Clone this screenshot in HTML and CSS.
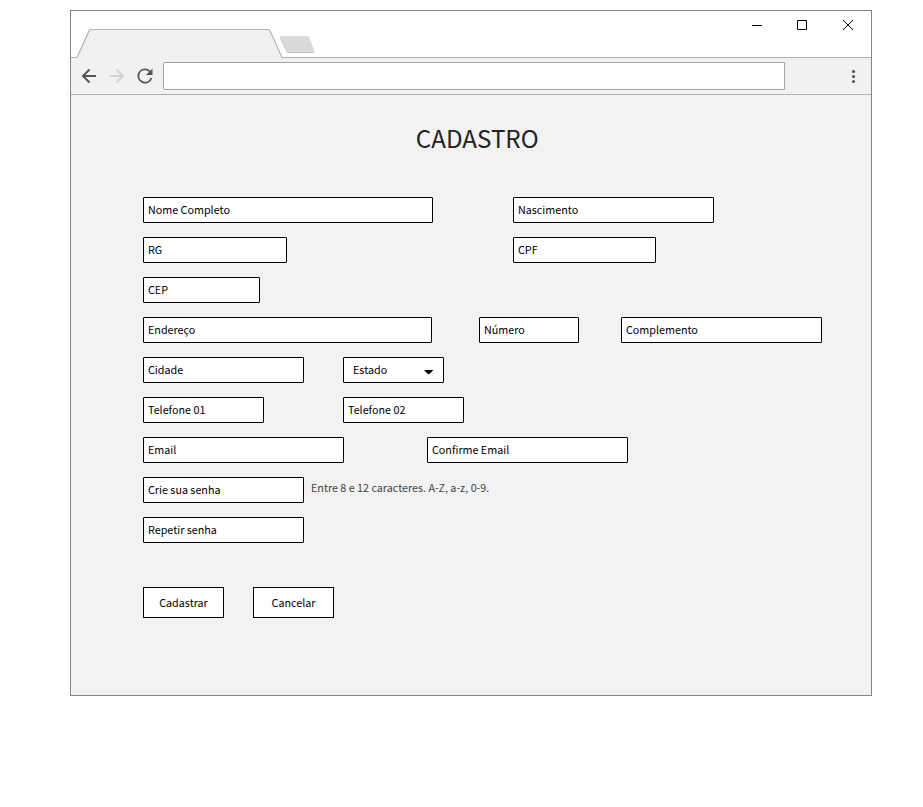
FILE: index.html
```html
<!DOCTYPE html>
<html lang="pt-BR">
<head>
<meta charset="utf-8">
<title>Cadastro</title>
<link rel="stylesheet" href="styles.css">
</head>
<body>
<div class="window">
  <svg class="titlebar" width="800" height="47" viewBox="0 0 800 47">
    <path d="M0 46.5H5.7L6.5 45.5L18.2 19.5Q18.7 18.5 19.5 18.5H197.5Q198.4 18.5 198.9 19.5L210.5 45.5L211.5 46.5H800V48H0Z" fill="#f1f1f1"/>
    <path d="M0 46.5H5.7L6.5 45.5L18.2 19.5Q18.7 18.5 19.5 18.5H197.5Q198.4 18.5 198.9 19.5L210.5 45.5L211.5 46.5H800" fill="none" stroke="#b2b2b2" stroke-width="1.2"/>
    <path d="M210 26H236Q237.500 26 238 27L243.300 40.500Q243.500 42 242 42H217.500Q216 42 215.300 40.500L209 27.500Q208.600 26 210 26Z" fill="#c4c4c4"/>
    <path d="M210 25H236Q237.500 25 238 26L243.300 39.500Q243.500 41 242 41H217.500Q216 41 215.300 39.500L209 26.500Q208.600 25 210 25Z" fill="#dadada"/>
    <path d="M681 14.500H691M726.500 9.500H735.500V18.500H726.500Z" fill="none" stroke="#000"/>
    <path d="M772 9L782 19M782 9L772 19" stroke="#000"/>
  </svg>
  <div class="toolbar">
    <svg class="nav" width="92" height="36" viewBox="0 0 92 36">
      <path d="M25 18H12.500M18.500 11.500L12 18L18.500 24.500" fill="none" stroke="#555" stroke-width="2"/>
      <path d="M39 18H51.500M45.500 11.500L52 18L45.500 24.500" fill="none" stroke="#d2d2d2" stroke-width="2"/>
      <path transform="translate(62.680 6.680) scale(.943)" d="M17.650 6.350A7.960 7.960 0 0 0 12 4a8 8 0 1 0 7.730 10h-2.080A6 6 0 1 1 12 6c1.660 0 3.140.69 4.220 1.780L13 11h7V4z" fill="#555"/>
    </svg>
    <div class="address"></div>
    <svg class="menu" width="5" height="16" viewBox="0 0 5 16">
      <g fill="#555"><circle cx="2.500" cy="3.500" r="1.600"/><circle cx="2.500" cy="8.500" r="1.600"/><circle cx="2.500" cy="13.500" r="1.600"/></g>
    </svg>
  </div>
  <main class="page">
    <h1 class="title">CADASTRO</h1>
    <form class="form">
      <div class="row gap-80"><div class="field w-290">Nome Completo</div><div class="field w-201">Nascimento</div></div>
      <div class="row gap-226"><div class="field w-144">RG</div><div class="field w-143">CPF</div></div>
      <div class="row"><div class="field w-117">CEP</div></div>
      <div class="row gap-47"><div class="field w-289">Endereço</div><div class="field w-100">Número</div><div class="field w-201 complement">Complemento</div></div>
      <div class="row gap-39"><div class="field w-161">Cidade</div><div class="field select">Estado<svg width="10" height="6" viewBox="0 0 10 6"><path d="M0 0H9.400L5.700 3.700Q4.700 4.500 3.700 3.700Z"/></svg></div></div>
      <div class="row gap-79"><div class="field w-121">Telefone 01</div><div class="field w-121">Telefone 02</div></div>
      <div class="row gap-83"><div class="field w-201">Email</div><div class="field w-201">Confirme Email</div></div>
      <div class="row gap-7"><div class="field w-161">Crie sua senha</div><span class="hint">Entre 8 e 12 caracteres. A-Z, a-z, 0-9.</span></div>
      <div class="row"><div class="field w-161">Repetir senha</div></div>
      <div class="actions"><button class="button" type="button">Cadastrar</button><button class="button" type="button">Cancelar</button></div>
    </form>
  </main>
</div>
</body>
</html>
```

FILE: styles.css
```css
* { box-sizing: border-box; }
body {
  margin: 0;
  background: #fff;
  font-family: "Noto Sans CJK JP", sans-serif;
  font-size: 10.75px;
  color: #000;
}
.window {
  width: 802px;
  height: 686px;
  margin: 10px 0 0 70px;
  border: 1px solid #858585;
  background: #f2f2f2;
}
.titlebar { display: block; background: #fff; }
.toolbar {
  display: flex;
  align-items: center;
  height: 37px;
  border-bottom: 1px solid #b2b2b2;
  background: #f1f1f1;
}
.address {
  width: 622px;
  height: 28px;
  border: 1px solid #a3a3a3;
  border-radius: 2px 0 0 2px;
  background: #fff;
}
.menu { margin-left: 66px; }
.title {
  margin: 0;
  padding: 23px 0 0 12.5px;
  height: 102px;
  font-size: 24.18px;
  font-weight: 400;
  line-height: 40px;
  text-align: center;
  color: #222;
}
.form {
  display: flex;
  flex-direction: column;
  gap: 14px;
  padding-left: 72px;
}
.row { display: flex; height: 26px; }
.gap-7 { gap: 7px; }
.gap-39 { gap: 39px; }
.gap-47 { gap: 47px; }
.gap-79 { gap: 79px; }
.gap-80 { gap: 80px; }
.gap-83 { gap: 83px; }
.gap-226 { gap: 226px; }
.field {
  height: 26px;
  padding-left: 4px;
  border: 1px solid #000;
  border-radius: 1px;
  background: #fff;
  line-height: 24px;
  white-space: nowrap;
}
.w-100 { width: 100px; }
.w-117 { width: 117px; }
.w-121 { width: 121px; }
.w-143 { width: 143px; }
.w-144 { width: 144px; }
.w-161 { width: 161px; }
.w-201 { width: 201px; }
.w-289 { width: 289px; }
.w-290 { width: 290px; }
.complement { margin-left: -5px; }
.select {
  display: flex;
  align-items: center;
  justify-content: space-between;
  width: 101px;
  padding: 0 9px;
}
.select svg { margin-top: 6px; }
.hint { line-height: 22px; color: #444; }
.actions { display: flex; gap: 29px; margin-top: 30px; }
.button {
  width: 81px;
  height: 31px;
  padding: 1px 0 0;
  border: 1px solid #000;
  background: #fff;
  font: inherit;
  line-height: 28px;
  color: #000;
}
```
